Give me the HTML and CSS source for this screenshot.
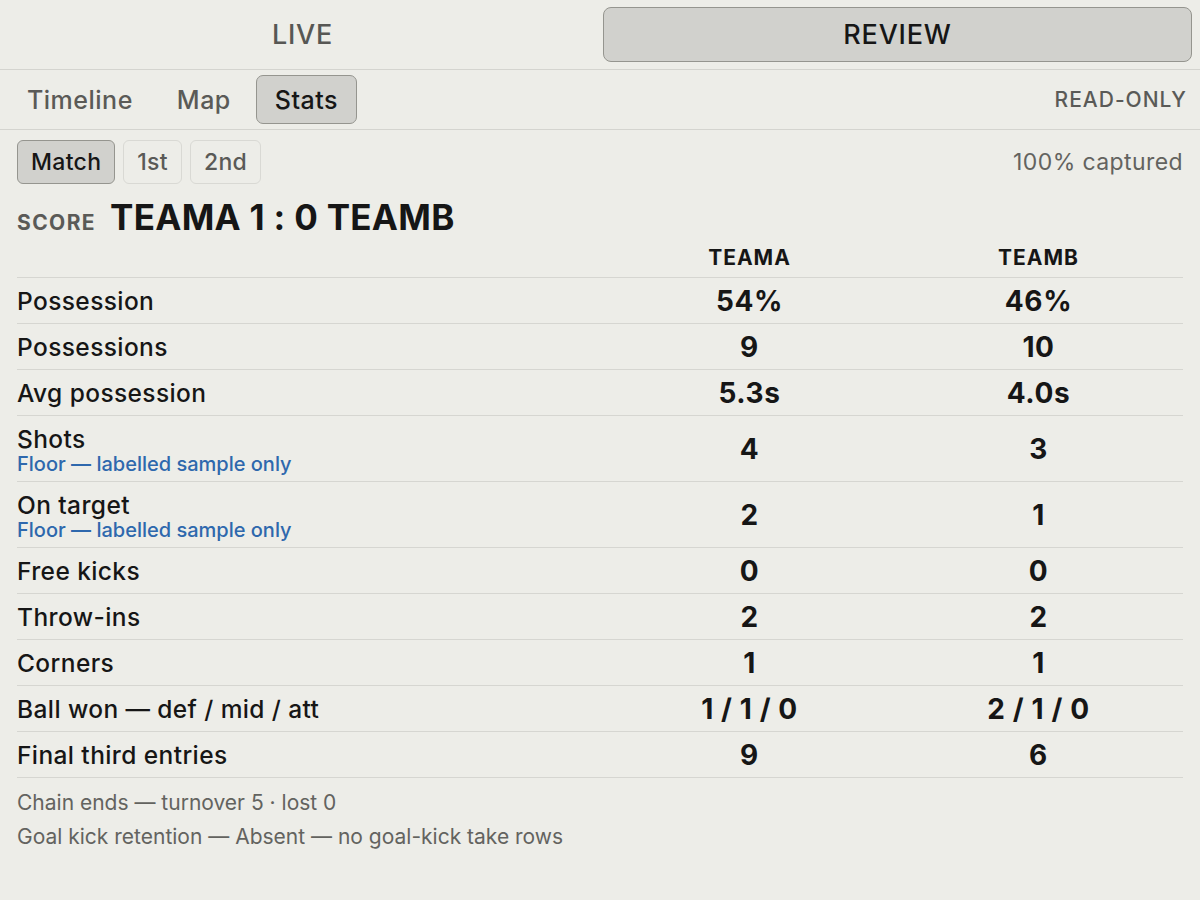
FILE: index.html
```html
<!DOCTYPE html>
<html lang="en">
<head>
    <meta charset="UTF-8">
    <meta name="viewport" content="width=device-width, initial-scale=1.0">
    <title>Match Review - Stats</title>
    <link rel="stylesheet" href="styles.css">
</head>
<body>
    <div class="mode-bar">
        <div class="mode">LIVE</div>
        <div class="mode active">REVIEW</div>
    </div>

    <div class="view-bar">
        <div class="views">
            <div class="view">Timeline</div>
            <div class="view">Map</div>
            <div class="view active">Stats</div>
        </div>
        <div class="readonly">READ-ONLY</div>
    </div>

    <div class="content">
        <div class="filter-row">
            <div class="periods">
                <div class="period active">Match</div>
                <div class="period">1st</div>
                <div class="period">2nd</div>
            </div>
            <div class="captured">100% captured</div>
        </div>

        <div class="score">
            <span class="score-label">SCORE</span>
            <span class="score-value">TEAMA 1 : 0 TEAMB</span>
        </div>

        <div class="stats">
            <div class="row head">
                <div></div>
                <div class="val">TEAMA</div>
                <div class="val">TEAMB</div>
            </div>
            <div class="row">
                <div class="name">Possession</div>
                <div class="val">54%</div>
                <div class="val">46%</div>
            </div>
            <div class="row">
                <div class="name">Possessions</div>
                <div class="val">9</div>
                <div class="val">10</div>
            </div>
            <div class="row">
                <div class="name">Avg possession</div>
                <div class="val">5.3s</div>
                <div class="val">4.0s</div>
            </div>
            <div class="row">
                <div class="name">Shots<span class="note">Floor — labelled sample only</span></div>
                <div class="val">4</div>
                <div class="val">3</div>
            </div>
            <div class="row">
                <div class="name">On target<span class="note">Floor — labelled sample only</span></div>
                <div class="val">2</div>
                <div class="val">1</div>
            </div>
            <div class="row">
                <div class="name">Free kicks</div>
                <div class="val">0</div>
                <div class="val">0</div>
            </div>
            <div class="row">
                <div class="name">Throw-ins</div>
                <div class="val">2</div>
                <div class="val">2</div>
            </div>
            <div class="row">
                <div class="name">Corners</div>
                <div class="val">1</div>
                <div class="val">1</div>
            </div>
            <div class="row">
                <div class="name">Ball won — def / mid / att</div>
                <div class="val">1 / 1 / 0</div>
                <div class="val">2 / 1 / 0</div>
            </div>
            <div class="row">
                <div class="name">Final third entries</div>
                <div class="val">9</div>
                <div class="val">6</div>
            </div>
        </div>

        <div class="footnotes">
            <p>Chain ends — turnover 5 · lost 0</p>
            <p>Goal kick retention — Absent — no goal-kick take rows</p>
        </div>
    </div>
</body>
</html>
```

FILE: styles.css
```css
body {
    margin: 0;
    background-color: #edede8;
    font-family: Inter, "Noto Sans", sans-serif;
    font-feature-settings: "calt" 0;
    color: #161616;
}

.mode-bar {
    display: grid;
    grid-template-columns: 1fr 1fr;
    gap: 6px;
    padding: 7px 8px;
    border-bottom: 1px solid #d4d4cf;
}

.mode {
    height: 55px;
    display: flex;
    align-items: center;
    justify-content: center;
    font-size: 27px;
    font-weight: 500;
    letter-spacing: 0.8px;
    color: #575754;
    border: 1px solid transparent;
    border-radius: 8px;
    box-sizing: border-box;
}

.mode.active {
    background-color: #d1d1cd;
    border-color: #95958f;
    color: #161616;
}

.view-bar {
    display: flex;
    justify-content: space-between;
    align-items: center;
    padding: 5px 13px 5px 8px;
    border-bottom: 1px solid #d4d4cf;
}

.views {
    display: flex;
    gap: 6px;
}

.view {
    height: 49px;
    padding: 0 18px;
    display: flex;
    align-items: center;
    font-size: 25px;
    font-weight: 500;
    letter-spacing: 0.5px;
    color: #5a5a57;
    border: 1px solid transparent;
    border-radius: 7px;
    box-sizing: border-box;
}

.view.active {
    background-color: #d1d1cd;
    border-color: #95958f;
    color: #161616;
}

.readonly {
    font-size: 21px;
    font-weight: 500;
    letter-spacing: 1px;
    color: #5a5a57;
}

.content {
    padding: 10px 17px 0;
}

.filter-row {
    display: flex;
    justify-content: space-between;
    align-items: center;
}

.periods {
    display: flex;
    gap: 8px;
}

.period {
    height: 44px;
    padding: 0 13px;
    display: flex;
    align-items: center;
    font-size: 23px;
    font-weight: 500;
    letter-spacing: 0.3px;
    color: #5a5a57;
    border: 1px solid #d9d9d4;
    border-radius: 6px;
    box-sizing: border-box;
}

.period.active {
    background-color: #d1d1cd;
    border-color: #95958f;
    color: #161616;
}

.captured {
    font-size: 23px;
    letter-spacing: 0.4px;
    color: #63635f;
}

.score {
    display: flex;
    align-items: baseline;
    gap: 14px;
    margin-top: 12px;
    height: 44px;
}

.score-label {
    font-size: 21px;
    font-weight: 700;
    letter-spacing: 1.4px;
    color: #5a5a57;
}

.score-value {
    font-size: 35px;
    font-weight: 700;
    letter-spacing: 0.3px;
    color: #161616;
}

.row {
    display: grid;
    grid-template-columns: 1fr 289px 289px;
    align-items: center;
    padding: 9px 0 7px;
    border-bottom: 1px solid #d6d6d1;
}

.row.head {
    padding: 4px 0 5px;
}

.row.head .val {
    font-size: 21px;
    letter-spacing: 1px;
    line-height: 28px;
}

.name {
    font-size: 24.5px;
    font-weight: 500;
    letter-spacing: 0.4px;
    line-height: 29px;
}

.note {
    display: block;
    font-size: 20px;
    letter-spacing: 0;
    line-height: 20px;
    color: #2e68ad;
}

.val {
    text-align: center;
    font-size: 28px;
    font-weight: 700;
    letter-spacing: 0.6px;
    line-height: 29px;
}

.footnotes {
    padding-top: 8px;
}

.footnotes p {
    margin: 0;
    font-size: 21px;
    line-height: 34px;
    color: #63635f;
}
```
